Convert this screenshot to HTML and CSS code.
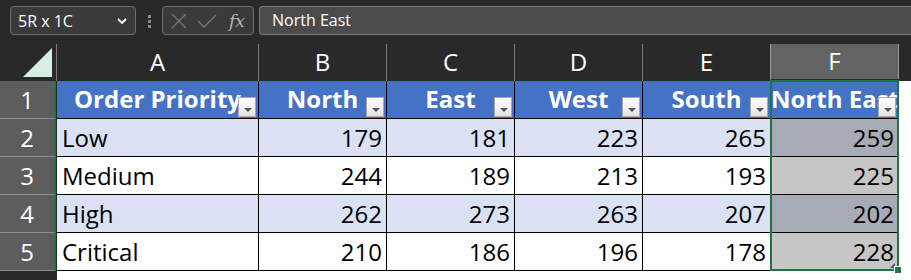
FILE: index.html
```html
<!DOCTYPE html>
<html lang="en">
<head>
    <meta charset="UTF-8">
    <title>Regional orders</title>
    <link rel="stylesheet" href="styles.css">
</head>
<body>
    <div class="toolbar">
        <div class="name-box">
            <span>5R x 1C</span>
            <svg class="chevron" width="12" height="8" viewBox="0 0 12 8"><path d="M2 2 L6 6 L10 2" fill="none" stroke="#fff" stroke-width="1.8"/></svg>
        </div>
        <div class="grip"><i></i><i></i><i></i></div>
        <div class="fx-box">
            <svg width="18" height="18" viewBox="0 0 18 18"><path d="M2 2 L16 16 M16 2 L2 16" stroke="#777" stroke-width="1.4"/></svg>
            <svg width="20" height="18" viewBox="0 0 20 18"><path d="M1 9 L7 15 L19 3" fill="none" stroke="#777" stroke-width="1.4"/></svg>
            <span class="fx">fx</span>
        </div>
        <div class="formula">North East</div>
    </div>

    <div class="sheet">
        <div class="corner"><svg width="30" height="30" viewBox="0 0 30 30"><path d="M29 0 L29 29 L0 29 Z" fill="#d4eee1"/></svg></div>
        <div class="colhead">A</div>
        <div class="colhead">B</div>
        <div class="colhead">C</div>
        <div class="colhead">D</div>
        <div class="colhead">E</div>
        <div class="colhead active">F</div>
        <div class="colhead blank"></div>

        <div class="rowhead">1</div>
        <div class="cell head">Order Priority<span class="filter"></span></div>
        <div class="cell head">North<span class="filter"></span></div>
        <div class="cell head">East<span class="filter"></span></div>
        <div class="cell head">West<span class="filter"></span></div>
        <div class="cell head">South<span class="filter"></span></div>
        <div class="cell head">North East<span class="filter"></span></div>
        <div class="cell empty"></div>

        <div class="rowhead">2</div>
        <div class="cell band">Low</div>
        <div class="cell band num">179</div>
        <div class="cell band num">181</div>
        <div class="cell band num">223</div>
        <div class="cell band num">265</div>
        <div class="cell band num sel">259</div>
        <div class="cell empty"></div>

        <div class="rowhead">3</div>
        <div class="cell">Medium</div>
        <div class="cell num">244</div>
        <div class="cell num">189</div>
        <div class="cell num">213</div>
        <div class="cell num">193</div>
        <div class="cell num sel">225</div>
        <div class="cell empty"></div>

        <div class="rowhead">4</div>
        <div class="cell band">High</div>
        <div class="cell band num">262</div>
        <div class="cell band num">273</div>
        <div class="cell band num">263</div>
        <div class="cell band num">207</div>
        <div class="cell band num sel">202</div>
        <div class="cell empty"></div>

        <div class="rowhead">5</div>
        <div class="cell">Critical</div>
        <div class="cell num">210</div>
        <div class="cell num">186</div>
        <div class="cell num">196</div>
        <div class="cell num">178</div>
        <div class="cell num sel">228</div>
        <div class="cell empty"></div>

        <div class="rowhead off"></div>
        <div class="cell empty wide"></div>

        <div class="selection"><span class="corner-mark"></span><span class="handle"></span></div>
    </div>
</body>
</html>
```

FILE: styles.css
```css
body {
    margin: 0;
    background-color: #292929;
    font-family: 'Open Sans', sans-serif;
    overflow: hidden;
}

/* formula bar */
.toolbar {
    height: 44px;
    display: flex;
    align-items: flex-start;
    padding: 6px 0 0 10px;
    box-sizing: border-box;
}

.name-box {
    width: 126px;
    height: 29px;
    box-sizing: border-box;
    border: 1px solid #6e6e6e;
    border-radius: 4px;
    background-color: #3a3a3a;
    color: #fff;
    font-size: 16px;
    display: flex;
    align-items: center;
    justify-content: space-between;
    padding: 0 7px 0 7px;
}

.grip {
    width: 26px;
    display: flex;
    flex-direction: column;
    align-items: center;
    gap: 2px;
    padding-top: 9px;
}

.grip i {
    width: 3px;
    height: 3px;
    background-color: #8c8c8c;
}

.fx-box {
    width: 92px;
    height: 29px;
    box-sizing: border-box;
    border: 1px solid #6e6e6e;
    border-radius: 4px;
    background-color: #3a3a3a;
    display: flex;
    align-items: center;
    gap: 9px;
    padding-left: 7px;
}

.fx {
    font-family: 'DejaVu Serif', serif;
    font-style: italic;
    font-size: 17px;
    color: #b5b5b5;
    margin-left: 3px;
}

.formula {
    flex: 1;
    margin-left: 5px;
    height: 29px;
    box-sizing: border-box;
    border: 1px solid #7a7a7a;
    border-right: none;
    border-radius: 4px 0 0 4px;
    background-color: #4b4b4b;
    color: #fff;
    font-size: 16px;
    padding-left: 12px;
    line-height: 27px;
}

/* grid */
.sheet {
    position: relative;
    display: grid;
    grid-template-columns: 57px 202px repeat(5, 128px) 1fr;
    grid-template-rows: 37px repeat(5, 38px) 20px;
    font-size: 24px;
}

.corner {
    display: flex;
    justify-content: flex-end;
    align-items: flex-end;
    padding: 0 3px 3px 0;
    box-sizing: border-box;
    border-right: 1px solid #7d7d7d;
}

.colhead {
    color: #fff;
    text-align: center;
    line-height: 36px;
    border-right: 1px solid #7d7d7d;
}

.colhead.active {
    background-color: #636363;
    border-left: 1px solid #9a9a9a;
    border-right: 1px solid #9a9a9a;
    margin-left: -1px;
    margin-bottom: 2px;
    line-height: 34px;
}

.colhead.blank {
    border-right: none;
}

.rowhead {
    background-color: #5d5d5d;
    color: #fff;
    text-align: center;
    line-height: 37px;
    border-bottom: 1px solid #8d8d8d;
    border-right: 2px solid #217346;
    margin-right: 1px;
}

.rowhead.off {
    background-color: #292929;
    border-right: none;
    border-bottom: none;
}

.cell {
    position: relative;
    background-color: #fff;
    color: #000;
    border-right: 1px solid #000;
    border-bottom: 1px solid #000;
    padding: 0 5px;
    line-height: 37px;
    white-space: nowrap;
    overflow: hidden;
}

.cell.head {
    background-color: #4472c4;
    color: #fff;
    font-weight: bold;
    text-align: center;
    padding: 0;
    line-height: 36px;
}

.cell.band {
    background-color: #d9e1f2;
}

.cell.num {
    text-align: right;
    padding-right: 4px;
}

.cell.sel {
    background-color: #c6c6c6;
}

.cell.band.sel {
    background-color: #a6abb6;
}

.cell.empty {
    border: none;
}

.cell.wide {
    grid-column: 2 / 9;
}

.filter {
    position: absolute;
    right: 2px;
    bottom: 1px;
    width: 18px;
    height: 20px;
    box-sizing: border-box;
    border: 1px solid #a9a9a9;
    background: linear-gradient(#ffffff, #e2e2e2);
}

.filter::after {
    content: "";
    position: absolute;
    left: 5px;
    top: 10px;
    border-left: 4px solid transparent;
    border-right: 4px solid transparent;
    border-top: 4px solid #555;
}

/* selection frame over column F, rows 1-5 */
.selection {
    position: absolute;
    left: 770px;
    top: 36px;
    width: 129px;
    height: 191px;
    box-sizing: border-box;
    border: 2px solid #217346;
    pointer-events: none;
}

.corner-mark {
    position: absolute;
    right: 2px;
    bottom: 1px;
    border-left: 5px solid transparent;
    border-bottom: 5px solid #3b4a8f;
}

.handle {
    position: absolute;
    right: -5px;
    bottom: -5px;
    width: 6px;
    height: 6px;
    background-color: #217346;
    border: 1px solid #fff;
}
```
